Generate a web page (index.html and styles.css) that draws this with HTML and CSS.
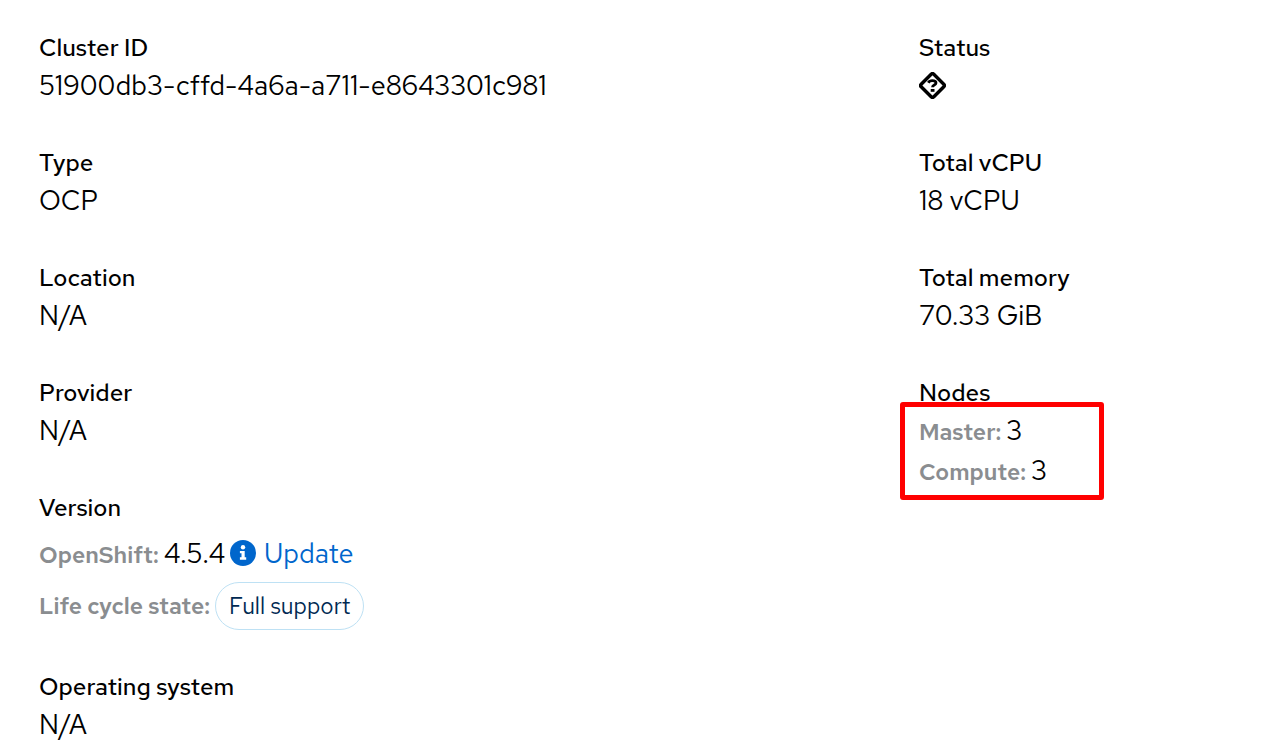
FILE: index.html
```html
<!DOCTYPE html>
<html lang="en">
<head>
<meta charset="utf-8">
<title>Cluster details</title>
<link rel="stylesheet" href="styles.css">
</head>
<body>
<main class="details">
  <dl class="column">
    <div class="group"><dt>Cluster ID</dt><dd>51900db3-cffd-4a6a-a711-e8643301c981</dd></div>
    <div class="group"><dt>Type</dt><dd>OCP</dd></div>
    <div class="group"><dt>Location</dt><dd>N/A</dd></div>
    <div class="group"><dt>Provider</dt><dd>N/A</dd></div>
    <div class="group">
      <dt>Version</dt>
      <dd class="version">
        <div class="line"><span class="key">OpenShift:</span><span>4.5.4</span>
          <a class="update" href="#update"><svg class="info" viewBox="0 0 26 26" aria-hidden="true"><circle cx="13" cy="13" r="13" fill="#06c"/><circle cx="13" cy="7.3" r="2.2" fill="#fff"/><path fill="#fff" d="M9.9 10.9h4.8v6.4h1.5v2.4H9.9v-2.4h1.6v-4H9.9z"/></svg>Update</a>
        </div>
        <div class="line"><span class="key">Life cycle state:</span><span class="badge">Full support</span></div>
      </dd>
    </div>
    <div class="group"><dt>Operating system</dt><dd>N/A</dd></div>
  </dl>
  <dl class="column">
    <div class="group"><dt>Status</dt><dd class="status"><svg class="unknown" viewBox="0 0 27 27" role="img" aria-label="Unknown"><path fill="none" stroke="#000" stroke-width="3.4" stroke-linejoin="round" d="M12.2 2.2Q13.5.9 14.8 2.2l10 10q1.3 1.3 0 2.6l-10 10q-1.3 1.3-2.6 0l-10-10q-1.3-1.3 0-2.6z"/><path fill="none" stroke="#000" stroke-width="2.8" d="M9.3 10.8c.9-1.6 2.2-2.1 3.9-2.1 2.2 0 3.8.7 3.8 2.3 0 2.2-3.5 1.8-3.5 4.2"/><path d="M11.7 17h3.8v2.8h-3.8z"/></svg></dd></div>
    <div class="group"><dt>Total vCPU</dt><dd>18 vCPU</dd></div>
    <div class="group"><dt>Total memory</dt><dd>70.33 GiB</dd></div>
    <div class="group"><dt>Nodes</dt>
      <dd class="nodes">
        <div class="line"><span class="key">Master:</span><span>3</span></div>
        <div class="line"><span class="key">Compute:</span><span>3</span></div>
      </dd>
    </div>
  </dl>
</main>
</body>
</html>
```
FILE: styles.css
```css
*, *::after { box-sizing: border-box; }
body { margin: 0; background: #fff; color: #000; font-family: "Red Hat Text", Inter, "Open Sans", sans-serif; font-size: 27px; line-height: 40px; font-weight: 400; }
.details { display: grid; grid-template-columns: 5fr 2fr; padding: 30px 9px 0 39px; }
.column { margin: 0; display: flex; flex-direction: column; gap: 39px; }
dt { font-size: 24px; line-height: 36px; font-weight: 500; }
dd { margin: 0; }
.line { display: flex; align-items: baseline; gap: 5px; }
.key { color: #8a8d90; font-size: 23px; line-height: 24px; font-weight: 600; }
.update { color: #06c; text-decoration: none; }
.info { width: 26px; height: 26px; margin-right: 8px; vertical-align: -3px; }
.version { display: flex; flex-direction: column; gap: 8px; padding-top: 8px; }
.badge { border: 1px solid #bee1f4; border-radius: 24px; padding: 3px 13px; color: #002952; font-size: 23px; }
.status { display: flex; align-items: center; height: 38px; margin-bottom: 2px; }
.unknown { width: 27px; height: 27px; }
.nodes { position: relative; }
.nodes::after { content: ""; position: absolute; top: -9px; left: -19px; width: 204px; height: 98px; border: 5px solid #f00; border-radius: 3px; }
```
